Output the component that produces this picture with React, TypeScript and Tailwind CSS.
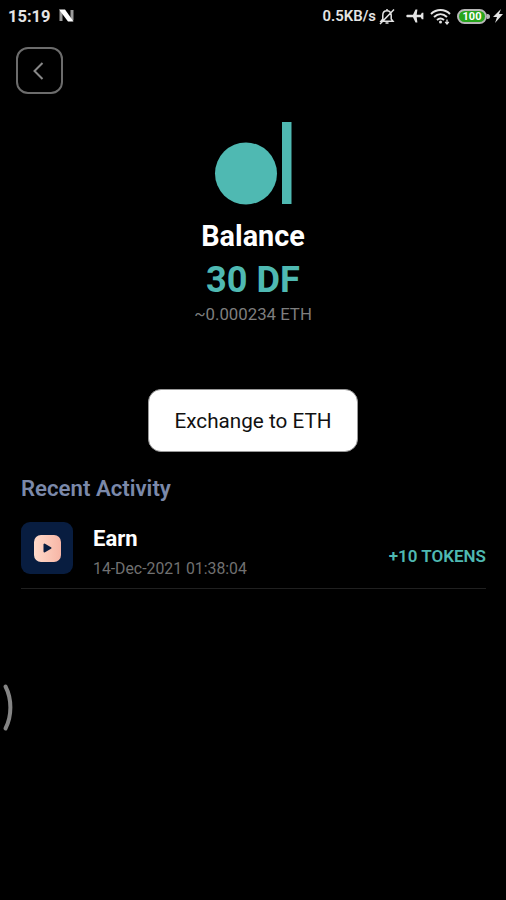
function StatusBar() {
  return (
    <header className="flex h-8 items-center justify-between pl-[8px] pr-[3px] text-[#e4e4e4]">
      <div className="flex items-center gap-[8px]">
        <span className="mt-px text-[16.5px] font-bold leading-8">15:19</span>
        <svg className="-mt-px" width="16" height="13" viewBox="0 0 16 13" fill="none">
          <path d="M2 12V1.500M13 11.500V1" stroke="#9a9a9a" strokeWidth="3" />
          <path d="M0 .5h6L14.500 12.500H9z" fill="#fff" />
        </svg>
      </div>
      <div className="flex items-center">
        <span className="mr-[2px] text-[14.9px] font-semibold leading-8">0.5KB/s</span>
        <svg className="mr-[10px]" width="18" height="17" viewBox="0 0 18 17" fill="none" stroke="currentColor" strokeWidth="1.500">
          <path d="M3 13.2h12l-1.8-2.3V7.2C13.200 4.500 11.500 2.800 9 2.800S4.800 4.500 4.800 7.200v3.700zM9 2.800V1M7.500 15h3M2 16L16 1.500" />
        </svg>
        <svg className="mr-[6px]" width="18" height="16" viewBox="0 0 18 16" fill="currentColor">
          <path d="M.3 8c0-.8.6-1.300 1.400-1.300H7L9.500 1.500h1.900l-.7 5.200h4.100L15.800 4.700h1.600v6.600h-1.600l-1-2h-4.100l.7 5.200H9.500L7 9.300H1.700C.9 9.300.3 8.800.3 8z" />
        </svg>
        <svg className="mr-[6px]" width="21" height="17" viewBox="0 0 21 17" fill="none" stroke="currentColor" strokeWidth="2">
          <path d="M1 6C6.500.8 14.500.8 20 6M4 9c4-3.700 9-3.700 13 0M7 12c2.300-2 4.700-2 7 0" />
          <circle cx="10.500" cy="14" r="1.500" fill="currentColor" stroke="none" />
          <path d="M17 11.500v4.500M15.200 13.800L17 16l1.800-2.200" strokeWidth="1.300" />
        </svg>
        <div className="flex h-[15px] w-[30px] items-center justify-center rounded-full border-2 border-[#b7b7b7] bg-[#27a51c] text-[11px] font-bold leading-none text-white">100</div>
        <div className="-mr-px h-[5px] w-[3px] rounded-r-sm bg-[#b7b7b7]" />
        <svg className="ml-[4px]" width="10" height="16" viewBox="0 0 10 16" fill="currentColor">
          <path d="M8 1L0 9h4l-2 6 8-9H6z" />
        </svg>
      </div>
    </header>
  );
}

function BackButton() {
  return (
    <button aria-label="Back" className="ml-4 mt-[15px] flex h-[47px] w-[47px] items-center justify-center rounded-[12px] border-2 border-[#6c6c6c]">
      <svg className="mr-[2px]" width="11" height="18" viewBox="0 0 11 18" fill="none" stroke="#888" strokeWidth="2">
        <path d="M9.500 1L1.500 9l8 8" />
      </svg>
    </button>
  );
}

function BalancePanel() {
  return (
    <section className="flex flex-col items-center">
      <svg className="mt-7" width="78" height="83" viewBox="0 0 78 83" fill="#4fb9b2">
        <circle cx="32" cy="51.500" r="31" />
        <path d="M68 0h9.500v82H68z" />
      </svg>
      <h1 className="mt-[13px] text-[28.8px] font-bold leading-9 text-white">Balance</h1>
      <p className="mt-[5px] text-[36.200px] font-bold leading-[42px] text-[#4fb9b2]">30 DF</p>
      <p className="mt-[1px] text-[16.8px] leading-6 text-[#7e7e7e]">~0.000234 ETH</p>
      <button className="mt-[63px] h-[63px] w-[210px] rounded-[13px] border border-[#999] bg-white pt-[2px] text-[20.700px] text-[#111]">Exchange to ETH</button>
    </section>
  );
}

function Activity() {
  return (
    <section className="ml-[21px] mr-[20px] mt-[20px]">
      <h2 className="text-[22.200px] font-semibold leading-8 text-[#7b89aa]">Recent Activity</h2>
      <div className="mt-[18px] flex h-[67px] items-start border-b border-[#202020]">
        <div className="flex h-[52px] w-[52px] items-center justify-center rounded-[9px] bg-[#081d40]">
          <div className="flex h-[27px] w-[27px] items-center justify-center rounded-[7px] bg-gradient-to-r from-[#ffdaca] to-[#f7b6a6]">
            <svg width="9" height="10" viewBox="0 0 9 10">
              <path d="M1.500 1.500v7L7.500 5z" fill="#081d40" stroke="#081d40" strokeWidth="2" strokeLinejoin="round" />
            </svg>
          </div>
        </div>
        <div className="ml-5 mt-px flex flex-col">
          <span className="text-[22px] font-bold leading-8 text-white">Earn</span>
          <span className="text-[15.800px] leading-7 text-[#717171]">14-Dec-2021 01:38:04</span>
        </div>
        <span className="ml-auto mt-[22px] text-[17px] font-semibold leading-6 text-[#4fb9b2]">+10 TOKENS</span>
      </div>
    </section>
  );
}

export default function App() {
  return (
    <main className="relative h-[900px] w-[506px] overflow-hidden bg-black font-['Roboto',sans-serif]">
      <StatusBar />
      <BackButton />
      <BalancePanel />
      <Activity />
      <svg className="absolute left-0 top-[683px]" width="15" height="49" viewBox="0 0 15 49" fill="none">
        <path d="M5.500 3.500C12 16 12 33 5.500 45.500" stroke="#858585" strokeWidth="4" strokeLinecap="round" />
      </svg>
    </main>
  );
}
